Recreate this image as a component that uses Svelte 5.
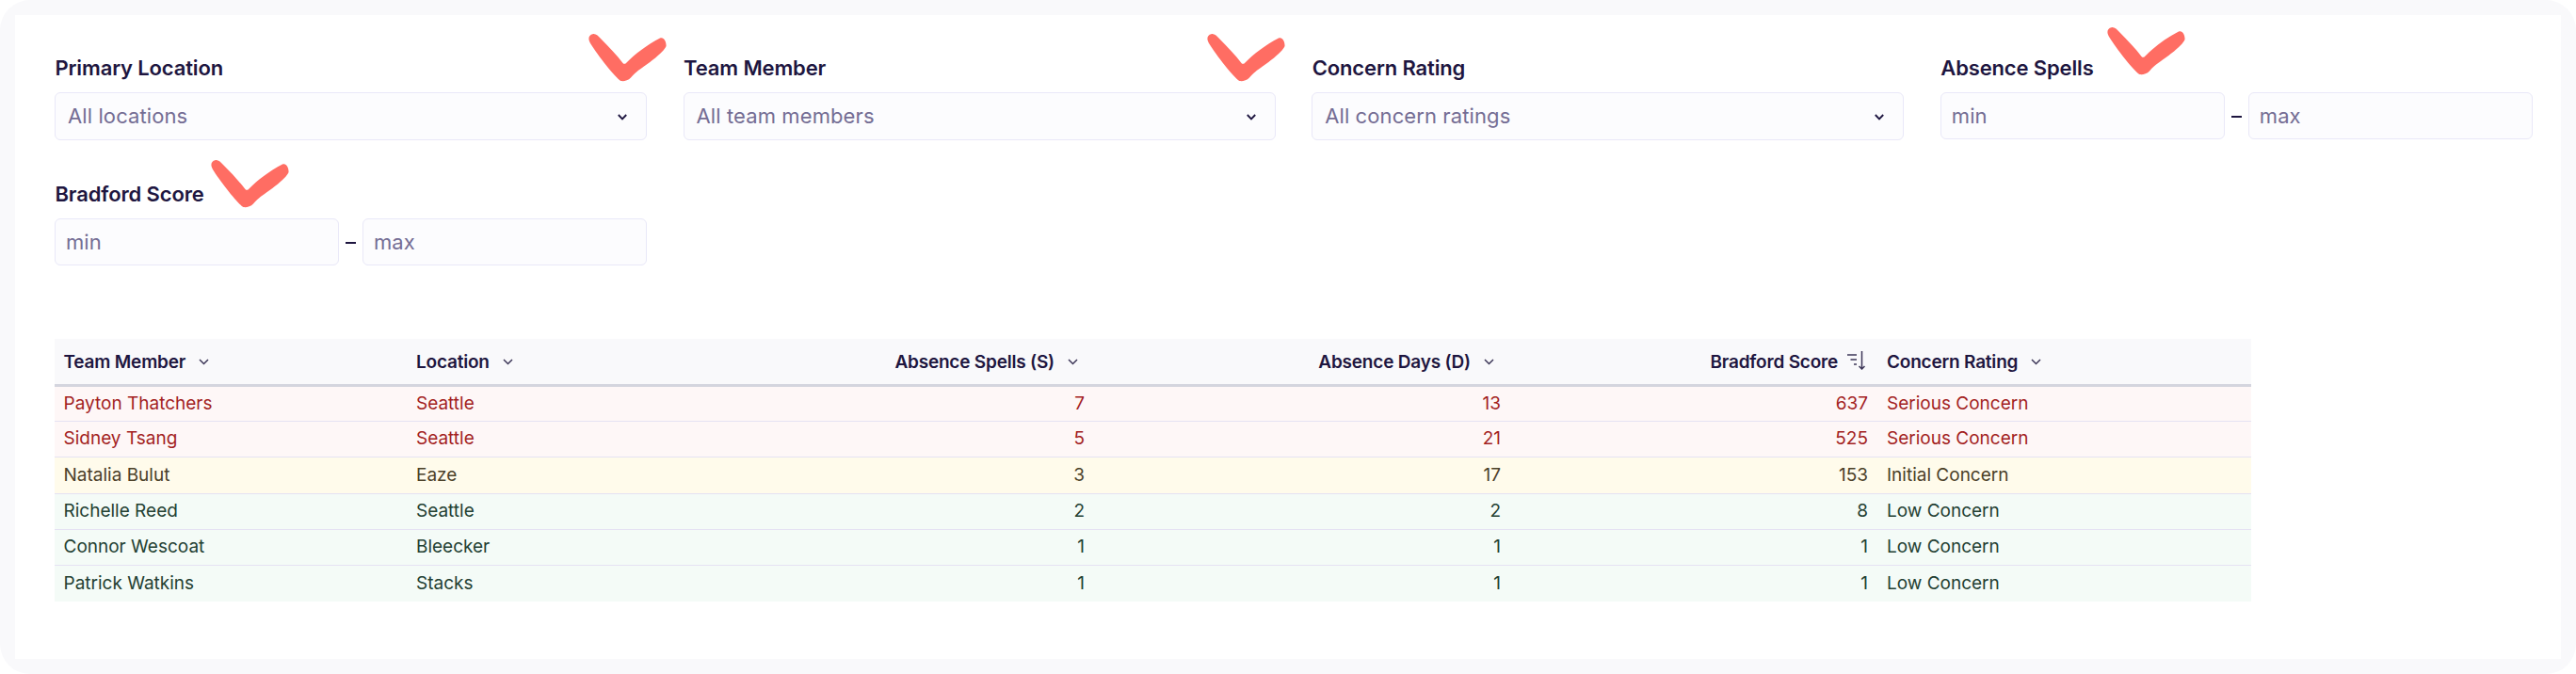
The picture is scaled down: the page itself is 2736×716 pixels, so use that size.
<script>
    const filters = [
        { label: 'Primary Location', placeholder: 'All locations', tick: [567, -22] },
        { label: 'Team Member', placeholder: 'All team members', tick: [556, -22] },
        { label: 'Concern Rating', placeholder: 'All concern ratings' },
        { label: 'Absence Spells', range: true, tick: [177, -29] },
        { label: 'Bradford Score', range: true, tick: [166, -22] }
    ];

    const columns = [
        { label: 'Team Member' },
        { label: 'Location' },
        { label: 'Absence Spells (S)', numeric: true },
        { label: 'Absence Days (D)', numeric: true },
        { label: 'Bradford Score', numeric: true, sorted: true },
        { label: 'Concern Rating' }
    ];

    const rows = [
        { level: 'serious', cells: ['Payton Thatchers', 'Seattle', 7, 13, 637, 'Serious Concern'] },
        { level: 'serious', cells: ['Sidney Tsang', 'Seattle', 5, 21, 525, 'Serious Concern'] },
        { level: 'initial', cells: ['Natalia Bulut', 'Eaze', 3, 17, 153, 'Initial Concern'] },
        { level: 'low', cells: ['Richelle Reed', 'Seattle', 2, 2, 8, 'Low Concern'] },
        { level: 'low', cells: ['Connor Wescoat', 'Bleecker', 1, 1, 1, 'Low Concern'] },
        { level: 'low', cells: ['Patrick Watkins', 'Stacks', 1, 1, 1, 'Low Concern'] }
    ];
</script>

<main class="frame">
    <div class="panel">
        <section class="filters">
            {#each filters as filter}
                <div class="filter">
                    <div class="label">{filter.label}</div>
                    {#if filter.range}
                        <div class="range">
                            <input type="text" placeholder="min" />
                            <span class="dash"></span>
                            <input type="text" placeholder="max" />
                        </div>
                    {:else}
                        <div class="select">
                            <span>{filter.placeholder}</span>
                            <svg width="10" height="7" viewBox="0 0 10 7">
                                <path d="M.8 1 5 5.300 9.200 1" />
                            </svg>
                        </div>
                    {/if}
                    {#if filter.tick}
                        <svg
                            class="tick"
                            style="left: {filter.tick[0]}px; top: {filter.tick[1]}px"
                            width="83"
                            height="51"
                            viewBox="0 0 83 51"
                        >
                            <path d="M4.500 .2C8 -.4 10.500 2.500 13 5C22 14 30 22.500 36.500 31C37.500 32.300 39 32 40 31C50 20.500 62 12 76 4.500C80 2.600 83 8.500 82.500 13C81 18 68 28.500 57 36C51 40 48 43 45 46.500C42 50 37 50.500 34.500 50C29 47 10 23 2 10C-1 5 .5 1 4.500 .2Z" />
                        </svg>
                    {/if}
                </div>
            {/each}
        </section>

        <table>
            <colgroup>
                <col class="c-member" />
                <col class="c-location" />
                <col class="c-spells" />
                <col class="c-days" />
                <col class="c-score" />
                <col />
            </colgroup>
            <thead>
                <tr>
                    {#each columns as column}
                        <th class:numeric={column.numeric}>
                            <div class="head">
                                <span>{column.label}</span>
                                {#if column.sorted}
                                    <svg class="sort" width="19" height="20" viewBox="0 0 19 20">
                                        <path d="M0 4H10M3.500 9H10M7 14H10M15.500 0V18M12.500 16 15.500 19 18.500 16" />
                                    </svg>
                                {:else}
                                    <svg class="chevron" width="11" height="7" viewBox="0 0 11 7">
                                        <path d="M1 1 5.500 5.500 10 1" />
                                    </svg>
                                {/if}
                            </div>
                        </th>
                    {/each}
                </tr>
            </thead>
            <tbody>
                {#each rows as row}
                    <tr class={row.level}>
                        {#each row.cells as cell, i}
                            <td class:numeric={columns[i].numeric}>{cell}</td>
                        {/each}
                    </tr>
                {/each}
            </tbody>
        </table>
    </div>
</main>

<style>
    :global(body) {
        background: #fff;
    }
    .frame {
        box-sizing: border-box;
        width: 2736px;
        height: 716px;
        padding: 16px;
        border-radius: 32px;
        background: #f9f9fb;
        color: #1e1640;
        font-family: Inter, sans-serif;
    }
    .panel {
        box-sizing: border-box;
        height: 684px;
        padding: 42px 30px 0 42px;
        background: #fff;
    }
    .filters {
        display: grid;
        grid-template-columns: repeat(4, 629px);
        grid-auto-rows: 134px;
        column-gap: 38.600px;
    }
    .filter {
        position: relative;
    }
    .label {
        height: 40px;
        padding-left: 0.5px;
        line-height: 29px;
        font-size: 22px;
        font-weight: 600;
        letter-spacing: -0.14px;
    }
    .select,
    input {
        box-sizing: border-box;
        border: 1px solid #e9e8f8;
        border-radius: 6px;
        background: #fcfcfe;
        color: #746d94;
        font-size: 22px;
        letter-spacing: 0.1px;
    }
    .select {
        display: flex;
        align-items: center;
        justify-content: space-between;
        height: 51px;
        padding: 0 20px 1px 13px;
    }
    .select svg {
        margin-top: 3px;
        fill: none;
        stroke: #1e1640;
        stroke-width: 1.900;
    }
    .range {
        display: flex;
        align-items: center;
        justify-content: space-between;
    }
    input {
        width: 302px;
        height: 50px;
        margin: 0;
        padding: 0 11px 1px;
        font-family: inherit;
    }
    input::placeholder {
        color: #746d94;
        opacity: 1;
    }
    .dash {
        width: 11px;
        height: 2px;
        margin-top: 2px;
        background: #1e1640;
    }
    .tick {
        position: absolute;
        fill: #ff6d63;
    }
    table {
        width: 2333px;
        margin-top: 34px;
        border-collapse: separate;
        border-spacing: 0;
        table-layout: fixed;
    }
    .c-member {
        width: 374px;
    }
    .c-location {
        width: 346px;
    }
    .c-spells {
        width: 384px;
    }
    .c-days {
        width: 442px;
    }
    .c-score {
        width: 390px;
    }
    th,
    td {
        box-sizing: border-box;
        padding: 0 10px;
        text-align: left;
        font-size: 19px;
    }
    th:first-child,
    td:first-child {
        padding-left: 9.5px;
    }
    th {
        height: 51px;
        border-bottom: 3px solid #d4d5de;
        background: #f9f9fb;
        font-weight: 600;
        letter-spacing: -0.2px;
    }
    .head {
        display: flex;
        align-items: center;
    }
    .numeric {
        text-align: right;
    }
    .numeric .head {
        justify-content: flex-end;
    }
    .head svg {
        fill: none;
        stroke: #3d3758;
        stroke-width: 1.500;
    }
    .chevron {
        margin-left: 14px;
    }
    .numeric .chevron {
        margin-right: 7px;
    }
    .head .sort {
        margin: -3px 3px 0 10px;
    }
    td {
        height: 38px;
        padding-bottom: 2px;
        border-bottom: 1px solid #e5e2f3;
    }
    tbody tr:first-child td {
        height: 37px;
    }
    tbody tr:nth-child(3) td {
        height: 39px;
    }
    tbody tr:last-child td {
        border-bottom: 0;
    }
    .serious td {
        background: #fef7f7;
        color: #a31f1f;
    }
    .initial td {
        background: #fffbeb;
        color: #4b4028;
    }
    .low td {
        background: #f4fbf7;
        color: #234032;
    }
</style>
